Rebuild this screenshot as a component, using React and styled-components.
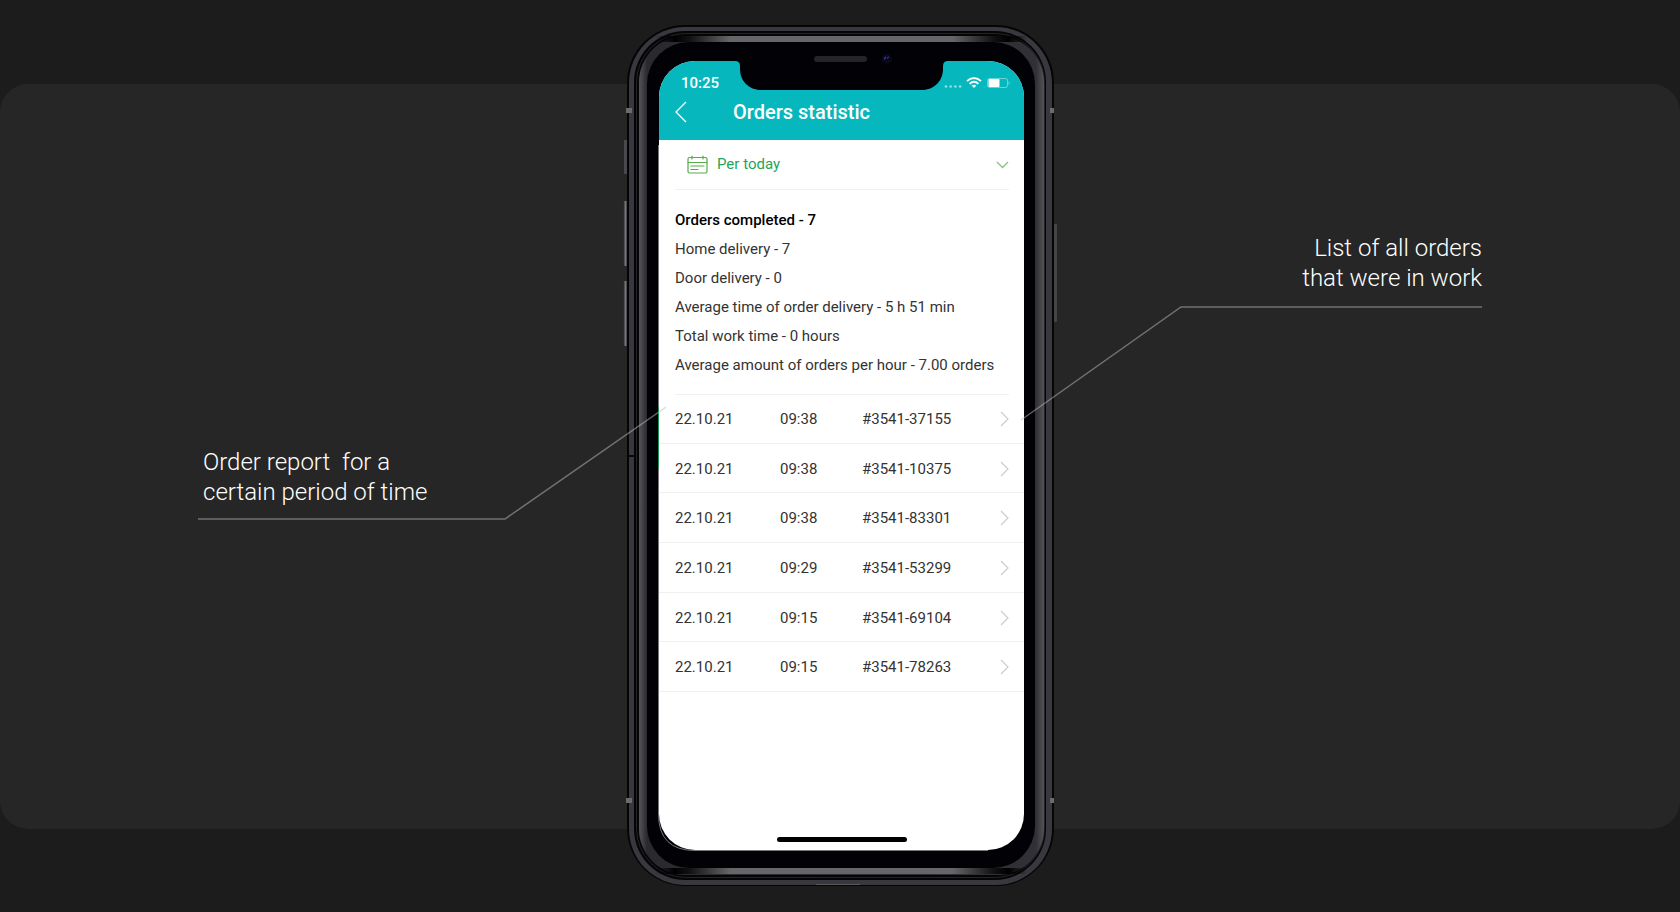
import React from "react";
import styled, { createGlobalStyle } from "styled-components";

const GlobalStyle = createGlobalStyle`
  * { box-sizing: border-box; }
  body {
    margin: 0;
    background: #1c1c1c;
    font-family: Roboto, "Liberation Sans", sans-serif;
  }
`;

const Page = styled.main`
  min-height: 100vh;
  padding: 84px 0 83px;
  overflow: hidden;
`;

const Panel = styled.section`
  display: grid;
  grid-template-columns: 1fr 440px 1fr;
  background: #262626;
  border-radius: 28px;
`;

const Caption = styled.div`
  position: relative;
  z-index: 2;
  width: 468px;
  color: #fff;
  font-size: 24px;
  line-height: 30px;
  font-weight: 300;

  p { margin: 0; white-space: pre; }
`;

const ReportCaption = styled(Caption)`
  justify-self: end;
  margin: 363px -46px 0 0;
  padding: 0 0 13px 5px;
  align-self: start;

  svg { position: absolute; left: 0; bottom: 0; }
`;

const OrdersCaption = styled(Caption)`
  justify-self: start;
  margin: 149px 0 0 -46px;
  text-align: right;
  align-self: start;

  svg { display: block; margin-top: 13px; }
`;

const Leader = styled.svg`
  fill: none;
  stroke: #bdbdbd;
  stroke-opacity: 0.5;
  stroke-width: 1.5;
  pointer-events: none;
`;

const Phone = styled.div`
  position: relative;
  margin: -59px 0 -58px;
  padding: 36px 36px 37px 39px;
`;

const PhoneBody = styled.svg`
  position: absolute;
  inset: 0;
`;

const Sensors = styled.svg`
  position: absolute;
  top: 28px;
  left: 194px;
`;

const Screen = styled.div`
  position: relative;
  min-height: 789px;
  display: flex;
  flex-direction: column;
  background: #fff;
  border-radius: 36px;
  overflow: hidden;
  color: #333;
  font-size: 15px;
`;

const Header = styled.header`
  height: 79px;
  background: #06b8bd;
  color: #fff;
`;

const Notch = styled.svg`
  position: absolute;
  top: 0;
  left: 76px;
`;

const StatusBar = styled.div`
  display: flex;
  justify-content: space-between;
  align-items: center;
  padding: 12px 14px 0 22px;
  height: 32px;
  font-size: 15px;
  font-weight: 500;
`;

const TitleBar = styled.div`
  display: flex;
  align-items: center;
  height: 38px;
  padding: 0 16px;
`;

const BackButton = styled.button`
  width: 58px;
  height: 24px;
  padding: 0;
  border: 0;
  background: none;
  color: inherit;
  text-align: left;

  svg { display: block; }
`;

const Title = styled.h1`
  margin: 0;
  font-size: 20px;
  line-height: 24px;
  font-weight: 500;
`;

const PeriodRow = styled.label`
  display: flex;
  align-items: center;
  height: 50px;
  margin: 0 15px 0 16px;
  padding-left: 12px;
  border-bottom: 1px solid #f0f0f0;
`;

const PeriodSelect = styled.select`
  flex: 1;
  appearance: none;
  margin: 0 0 0 9px;
  padding: 0 0 2px;
  border: 0;
  background: none;
  color: #1fa45b;
  font: 400 15px/20px Roboto, "Liberation Sans", sans-serif;
`;

const Summary = styled.ul`
  list-style: none;
  margin: 0 15px 0 16px;
  padding: 16px 0 14px;
  border-bottom: 1px solid #f0f0f0;
`;

const SummaryItem = styled.li`
  height: 29px;
  line-height: 29px;
  white-space: nowrap;
  color: ${(p) => (p.$strong ? "#000" : "#333")};
  font-weight: ${(p) => (p.$strong ? 500 : 400)};
`;

const Orders = styled.table`
  width: 100%;
  height: 297px;
  table-layout: fixed;
  border-collapse: collapse;
`;

const Row = styled.tr`
  border-bottom: 1px solid #efefef;
`;

const Cell = styled.td`
  width: ${(p) => p.$w};
  padding: 1px 0 0 ${(p) => p.$pad || "0"};
`;

const RowLink = styled.a`
  display: block;
  color: #ccc;

  svg { display: block; margin-left: auto; margin-right: 15px; }
`;

const HomeBar = styled.div`
  width: 130px;
  height: 5px;
  margin: auto auto 8px 118px;
  border-radius: 3px;
  background: #000;
`;

const summary = [
  "Orders completed - 7",
  "Home delivery - 7",
  "Door delivery - 0",
  "Average time of order delivery - 5 h 51 min",
  "Total work time - 0 hours",
  "Average amount of orders per hour - 7.00 orders",
];

const orders = [
  ["22.10.21", "09:38", "#3541-37155"],
  ["22.10.21", "09:38", "#3541-10375"],
  ["22.10.21", "09:38", "#3541-83301"],
  ["22.10.21", "09:29", "#3541-53299"],
  ["22.10.21", "09:15", "#3541-69104"],
  ["22.10.21", "09:15", "#3541-78263"],
];

function Frame() {
  return (
    <PhoneBody width="440" height="862" viewBox="0 0 440 862" aria-hidden="true">
      <defs>
        <linearGradient id="edge" x1="0" x2="1" y1="0" y2="0">
          <stop offset="0" stopColor="#000" stopOpacity="0" />
          <stop offset="0.05" stopColor="#000" />
          <stop offset="0.09" stopColor="#111" />
          <stop offset="0.2" stopColor="#666668" />
          <stop offset="0.8" stopColor="#666668" />
          <stop offset="0.91" stopColor="#111" />
          <stop offset="0.95" stopColor="#000" />
          <stop offset="1" stopColor="#000" stopOpacity="0" />
        </linearGradient>
        <linearGradient id="band" x1="0" x2="1" y1="0" y2="0">
          <stop offset="0" stopColor="#555459" />
          <stop offset="0.02" stopColor="#29292e" />
          <stop offset="0.98" stopColor="#303036" />
          <stop offset="1" stopColor="#535357" />
        </linearGradient>
        <linearGradient id="key" x1="0" x2="1" y1="0" y2="0">
          <stop offset="0" stopColor="#171717" />
          <stop offset="0.5" stopColor="#77777a" />
          <stop offset="1" stopColor="#111" />
        </linearGradient>
      </defs>
      <rect x="4" y="115" width="4" height="34" rx="1" fill="#4a4a4c" />
      <rect x="3" y="176" width="5" height="65" rx="1" fill="url(#key)" />
      <rect x="3" y="256" width="5" height="65" rx="1" fill="url(#key)" />
      <rect x="432" y="199" width="5" height="98" rx="1" fill="#464648" />
      <rect x="7" y="0" width="427" height="861" rx="58" fill="#050506" />
      <rect x="9" y="2" width="423" height="858" rx="56" fill="#38383e" />
      <rect x="14" y="6" width="412" height="849" rx="51" fill="#050507" />
      <rect x="16.5" y="8.5" width="408" height="844" rx="49" fill="none" stroke="#242428" />
      <rect x="19" y="11" width="405" height="839" rx="46" fill="url(#band)" />
      <path d="M36 11H407V17H36ZM36 843H407V849H36Z" fill="url(#edge)" />
      <rect x="27" y="17" width="388" height="826" rx="42" fill="#020206" />
      <path d="M6 83h6v5H6zM430 83h4v5h-4zM6 773h6v5H6zM430 773h4v5h-4z" fill="#6b6b6e" />
      <path d="M9 430h5v2H9z" fill="#08080a" />
      <path d="M196 859.5h44" stroke="#5a5a5d" />
      <path d="M38.5 120V789Q38.500 825.500 75 825.500H368" fill="none" stroke="#77777a" />
      <path d="M38.5 382v60" stroke="#149650" />
    </PhoneBody>
  );
}

function StatusIcons() {
  return (
    <svg width="66" height="14" viewBox="0 0 66 14" aria-hidden="true">
      <g fill="#fff" fillOpacity="0.55">
        <circle cx="2" cy="10.500" r="1.300" />
        <circle cx="6.700" cy="10.500" r="1.300" />
        <circle cx="11.400" cy="10.500" r="1.300" />
        <circle cx="16.100" cy="10.500" r="1.300" />
      </g>
      <g fill="none" stroke="#fff" strokeWidth="1.8">
        <path d="M23 5.200C27 1 33 1 37 5.200" />
        <path d="M25.600 7.800C28.400 5.200 31.600 5.200 34.400 7.800" />
      </g>
      <path d="M27.600 9.600Q30 7.800 32.400 9.600L30 12Z" fill="#fff" />
      <rect x="43.500" y="2.500" width="20" height="9" rx="2" fill="none" stroke="#fff" strokeOpacity="0.4" />
      <rect x="44.500" y="3" width="11" height="8" rx="1" fill="#fff" />
      <path d="M65 5.500v3" stroke="#fff" strokeOpacity="0.4" />
    </svg>
  );
}

function PhoneScreen() {
  return (
    <Screen>
      <Header>
        <Notch width="213" height="29" viewBox="0 0 213 29" aria-hidden="true">
          <path d="M0 0Q5 0 5 5V8C5 20 14 29 26 29H187C199 29 208 20 208 8V5Q208 0 213 0Z" fill="#020206" />
        </Notch>
        <StatusBar>
          <span>10:25</span>
          <StatusIcons />
        </StatusBar>
        <TitleBar>
          <BackButton aria-label="Back">
            <svg width="12" height="22" viewBox="0 0 12 22" fill="none" stroke="currentColor" strokeWidth="1.3">
              <path d="M11 1L1 11L11 21" />
            </svg>
          </BackButton>
          <Title>Orders statistic</Title>
        </TitleBar>
      </Header>
      <PeriodRow>
        <svg width="21" height="19" viewBox="0 0 21 19" fill="none" stroke="#55ad4a" strokeWidth="1.200" strokeLinecap="round" aria-hidden="true">
          <rect x="1" y="2.500" width="19" height="15.500" rx="1.500" />
          <path d="M1 7.500H20M5 1V4M16 1V4M4 11H17M4 14.500H11" />
        </svg>
        <PeriodSelect aria-label="Period" defaultValue="today">
          <option value="today">Per today</option>
        </PeriodSelect>
        <svg width="13" height="8" viewBox="0 0 13 8" fill="none" stroke="#86c67c" strokeWidth="1.300" aria-hidden="true">
          <path d="M1 1L6.500 6.500L12 1" />
        </svg>
      </PeriodRow>
      <Summary>
        {summary.map((text, i) => (
          <SummaryItem key={text} $strong={i === 0}>{text}</SummaryItem>
        ))}
      </Summary>
      <Orders aria-label="Orders">
        <tbody>
          {orders.map(([date, time, id]) => (
            <Row key={id}>
              <Cell $w="121px" $pad="16px">{date}</Cell>
              <Cell $w="82px">{time}</Cell>
              <Cell $w="100px">{id}</Cell>
              <Cell>
                <RowLink href="#order" aria-label={`Open order ${id}`}>
                  <svg width="9" height="16" viewBox="0 0 9 16" fill="none" stroke="currentColor" strokeWidth="1.200">
                    <path d="M1 1L8 8L1 15" />
                  </svg>
                </RowLink>
              </Cell>
            </Row>
          ))}
        </tbody>
      </Orders>
      <HomeBar />
    </Screen>
  );
}

export default function App() {
  return (
    <>
      <GlobalStyle />
      <Page>
        <Panel>
          <ReportCaption>
            <p>{"Order report  for a\ncertain period of time"}</p>
            <Leader width="468" height="114" viewBox="0 0 468 114" aria-hidden="true">
              <path d="M0 113H307L468 1" />
            </Leader>
          </ReportCaption>
          <Phone>
            <Frame />
            <PhoneScreen />
            <Sensors width="80" height="12" viewBox="0 0 80 12" aria-hidden="true">
              <rect x="0" y="3" width="53" height="6" rx="3" fill="#252527" />
              <circle cx="73" cy="6" r="5" fill="#080816" />
              <path d="M70 6l1-2h1l-1 2zM73 5l1-1h1l-1 1z" fill="#3a3ae0" stroke="#2a2acb" />
            </Sensors>
          </Phone>
          <OrdersCaption>
            <p>{"List of all orders\nthat were in work"}</p>
            <Leader width="468" height="115" viewBox="0 0 468 115" aria-hidden="true">
              <path d="M7 114L167 1H468" />
            </Leader>
          </OrdersCaption>
        </Panel>
      </Page>
    </>
  );
}
